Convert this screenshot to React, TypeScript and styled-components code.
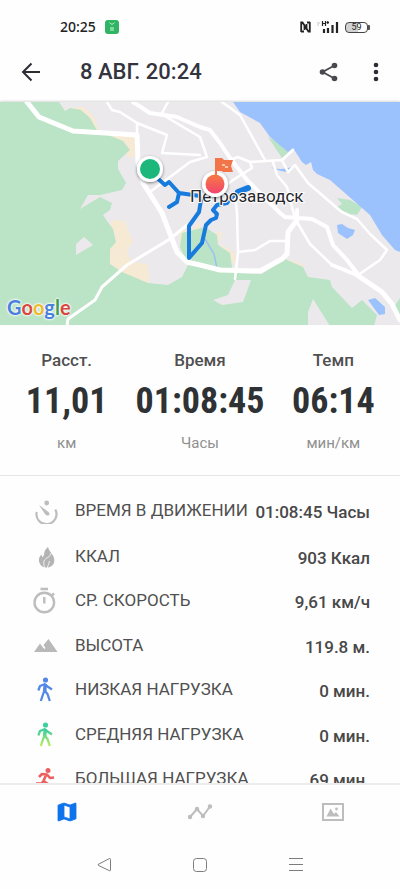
import React from "react";
import styled, { createGlobalStyle } from "styled-components";

const GlobalStyle = createGlobalStyle`
  * { box-sizing: border-box; }
  body { margin: 0; background: #fff; font-family: Roboto, "Noto Sans", sans-serif; color: #333; }
  button { border: 0; padding: 0; background: none; font: inherit; color: inherit; cursor: pointer; }
`;

const Screen = styled.div`
  display: flex;
  flex-direction: column;
  height: 100vh;
  background: #fefefe;
  overflow: hidden;
`;

const StatusBar = styled.div`
  display: flex;
  align-items: center;
  justify-content: space-between;
  flex: none;
  padding: 16px 30px 0 60px;
  height: 38px;
`;

const StatusGroup = styled.div<{ $gap: number }>`
  display: flex;
  align-items: center;
  gap: ${(p) => p.$gap}px;
`;

const Clock = styled.span`
  font: 500 14px/20px "Noto Sans", sans-serif;
  color: #222;
`;

const Battery = styled.span`
  display: flex;
  align-items: center;
  &::after { content: ""; width: 2px; height: 5px; background: #555; border-radius: 0 1px 1px 0; }
`;

const BatteryCell = styled.span`
  display: flex;
  align-items: center;
  justify-content: center;
  width: 23px;
  height: 11px;
  border: 1px solid #444;
  border-radius: 4px;
  background: linear-gradient(90deg, #d2d2d2 55%, #fff 55%);
  font-size: 9px;
  line-height: 9px;
  color: #222;
`;

const Header = styled.header`
  display: flex;
  align-items: center;
  flex: none;
  height: 64px;
  padding: 3px 12px 0 19px;
`;

const IconButton = styled.button`
  display: grid;
  place-items: center;
  width: 24px;
  height: 24px;
`;

const Title = styled.h1`
  flex: 1;
  margin: 0 0 0 37px;
  font-size: 22px;
  line-height: 28px;
  font-weight: 500;
  color: #34343f;
`;

const HeaderActions = styled.div`
  display: flex;
  gap: 23px;
`;

const MapPanel = styled.section`
  position: relative;
  flex: none;
  height: 223px;
  background: #ece9ed;
  box-shadow: 0 -1px 2px rgba(0, 0, 0, 0.15);
  overflow: hidden;
  svg { display: block; width: 100%; height: 100%; }
`;

const GoogleMark = styled.span`
  position: absolute;
  left: 7px;
  bottom: 6px;
  font: 700 20px/24px Lato, sans-serif;
  text-shadow: 0 0 2px #fff, 0 0 2px #fff, 0 0 3px #fff;
`;

const Letter = styled.span<{ $color: string }>`
  color: ${(p) => p.$color};
`;

const Stats = styled.section`
  display: grid;
  grid-template-columns: repeat(3, 1fr);
  flex: none;
  height: 151px;
  padding-top: 23px;
  border-bottom: 1px solid #e6e6e6;
  text-align: center;
`;

const Stat = styled.div`
  display: flex;
  flex-direction: column;
  align-items: center;
`;

const StatName = styled.span`
  font-size: 17px;
  line-height: 24px;
  font-weight: 500;
  color: #505050;
`;

const StatValue = styled.strong`
  font: 700 36px/58px "Roboto Condensed", "Liberation Sans Narrow", "Liberation Sans", sans-serif;
  color: #2f3234;
`;

const StatUnit = styled.span`
  font-size: 15px;
  line-height: 26px;
  color: #909090;
`;

const Details = styled.ul`
  flex: 1;
  min-height: 0;
  margin: 0;
  padding: 11px 30px 0 31px;
  list-style: none;
  overflow: hidden;
`;

const DetailRow = styled.li`
  display: grid;
  grid-template-columns: 28px 1fr auto;
  column-gap: 16px;
  align-items: center;
  height: 44px;
  &:nth-child(even) { height: 45px; }
  &:first-child { height: 46px; }
  svg { display: block; width: 28px; height: 28px; }
`;

const DetailName = styled.span`
  font-size: 17px;
  line-height: 20px;
  color: #505050;
  white-space: nowrap;
`;

const DetailValue = styled.span`
  padding-top: 4px;
  margin-left: -16px;
  font-size: 17px;
  line-height: 20px;
  font-weight: 500;
  color: #484848;
  white-space: nowrap;
`;

const Tabs = styled.nav`
  display: grid;
  grid-template-columns: repeat(3, 1fr);
  flex: none;
  height: 55px;
  border-top: 2px solid #ececec;
`;

const Tab = styled.button`
  display: grid;
  place-items: center;
  color: #bdbdbd;
  &[aria-current="page"] { color: #0f74ec; }
`;

const SystemNav = styled.nav`
  display: flex;
  justify-content: center;
  gap: 72px;
  flex: none;
  height: 51px;
  padding-top: 15px;
  color: #7c7c7c;
`;

function Walker({ paint }: { paint: string }) {
  return (
    <>
      <circle cx="14.500" cy="5" r="2.600" fill={paint} />
      <path d="M13 8.500L16 9L15.500 16L12 16Z" fill={paint} />
      <path d="M7.300 15.500L9 11L13.500 9.200L16.500 11.500L21 14.500M14 9.500L13 16.500L9.800 26M13.500 15.500L16.500 19L18.800 26" fill="none" stroke={paint} strokeWidth="2.300" strokeLinejoin="round" />
    </>
  );
}

const Icons = {
  motion: (
    <svg viewBox="0 0 28 28">
      <path d="M5.700 16A10 10 0 1 0 24.300 13.500" fill="none" stroke="#bdbdbd" strokeWidth="2.200" />
      <path d="M8 9L17.500 16Q19.500 18 17.500 19.500Q15.500 20 14 18Z" fill="#bdbdbd" />
      <circle cx="15.700" cy="7" r="2.400" fill="#bdbdbd" />
    </svg>
  ),
  fire: (
    <svg viewBox="0 0 28 28">
      <path d="M17 5C18 10 24 13 23.300 19C23 23 20 25 17 25.500H14.500C10 25 7.500 21 8 17C8.200 15 9.500 13.500 10.500 12.500C10.500 14 11 15 12 15C14 12 12 9 17 5Z" fill="#b4b4b4" />
      <path d="M20 11C20 15 14 16 13 19C12.300 21.500 13 24 14 26M18.300 19C18.500 22 16.500 23 16.500 26" fill="none" stroke="#fefefe" strokeWidth=".8" />
    </svg>
  ),
  timer: (
    <svg viewBox="0 0 28 28">
      <g fill="none" stroke="#bdbdbd" strokeWidth="2.400">
        <circle cx="13.300" cy="16.500" r="9.800" />
        <path d="M9.500 3H17M13.300 11V17.500M20 10L23 7.500" />
      </g>
    </svg>
  ),
  height: (
    <svg viewBox="0 0 28 28">
      <path d="M3 21L9 12.500L12 16.500L13.500 18L14.500 17L12.500 14L17.500 8L26.500 21Z" fill="#b9b9b9" />
    </svg>
  ),
  low: (
    <svg viewBox="0 0 28 28"><Walker paint="#5488e6" /></svg>
  ),
  medium: (
    <svg viewBox="0 0 28 28">
      <defs><linearGradient id="mid" gradientUnits="userSpaceOnUse" x1="0" y1="3" x2="0" y2="27"><stop offset=".3" stopColor="#3fcf9d" /><stop offset="1" stopColor="#c6ee58" /></linearGradient></defs>
      <Walker paint="url(#mid)" />
    </svg>
  ),
  high: (
    <svg viewBox="0 0 28 28">
      <g fill="none" stroke="#ec6060" strokeWidth="2.600" strokeLinejoin="round">
        <path d="M8 13L11 10L16 10.500L19 14L23 13.500M15 11L12.500 17L17 20V26M12.500 17L10.500 19.500H5" />
      </g>
      <circle cx="17" cy="6.500" r="2.500" fill="#ec6060" />
    </svg>
  ),
};

const stats = [
  { name: "Расст.", value: "11,01", unit: "км" },
  { name: "Время", value: "01:08:45", unit: "Часы" },
  { name: "Темп", value: "06:14", unit: "мин/км" },
];

const details: { icon: keyof typeof Icons; name: string; value: string }[] = [
  { icon: "motion", name: "ВРЕМЯ В ДВИЖЕНИИ", value: "01:08:45 Часы" },
  { icon: "fire", name: "ККАЛ", value: "903 Ккал" },
  { icon: "timer", name: "СР. СКОРОСТЬ", value: "9,61 км/ч" },
  { icon: "height", name: "ВЫСОТА", value: "119.8 м." },
  { icon: "low", name: "НИЗКАЯ НАГРУЗКА", value: "0 мин." },
  { icon: "medium", name: "СРЕДНЯЯ НАГРУЗКА", value: "0 мин." },
  { icon: "high", name: "БОЛЬШАЯ НАГРУЗКА", value: "69 мин." },
];

const google: [string, string][] = [
  ["G", "#4a7fdc"], ["o", "#d8473c"], ["o", "#edb92e"], ["g", "#4a7fdc"], ["l", "#3c9d55"], ["e", "#d8473c"],
];

function RouteMap() {
  return (
    <svg viewBox="0 0 400 223" preserveAspectRatio="xMidYMid slice" role="img" aria-label="Маршрут">
      <defs>
        <linearGradient id="finish" x1="0" y1="0" x2="0" y2="1"><stop offset="0" stopColor="#f67a45" /><stop offset="1" stopColor="#f2456c" /></linearGradient>
        <filter id="shade" x="-30%" y="-30%" width="160%" height="160%"><feDropShadow dx="0" dy="1" stdDeviation="1.500" floodOpacity=".5" /></filter>
      </defs>
      <rect width="400" height="224" fill="#ece9ed" />
      <g fill="#f6ead4">
        <path d="M66 6L84 5L94 15L99 29L80 20ZM106 33L135 34L135 55L128 55L120 40ZM111 118L125 119L133 140L127 148L131 160L148 162L149 182L120 172L108 162ZM282 156L302 162L309 178L290 165ZM216 130L222 130L220 142L234 150L236 163L225 155ZM180 130L190 125L186 160L180 145ZM191 128L200 120V132H194Z" />
      </g>
      <g fill="#bbe3c6">
        <path d="M0 0H59L65 9L70 6L81 8L90 16L98 30L108 33L123 39L130 48L118 59L118 67L126 81L122 88L100 93L88 93L80 107L100 95L112 101L110 108L103 113L107 119L113 127L116 140L110 147V162L122 170L148 181L168 183L182 175L188 163L200 165L233 171L262 172L285 157L303 165L308 175L330 178L332 185L352 206L362 198L377 213L374 224H0Z" />
        <path d="M182 131L205 125L217 133L218 143L230 151L233 172L188 163L180 145Z" />
        <path d="M268 35L277 40L289 50L282 56ZM337 96L350 98L362 105L357 113L343 110L337 105L342 102ZM345 110H355L350 114ZM400 196V218L394 205Z" />
      </g>
      <path d="M76 142L84 135L93 143L76 153ZM308 224V210L313 197L330 224ZM235 178H251L243 200L222 203L213 198L228 193Z" fill="#ece9ed" />
      <g fill="#9cc2fd">
        <path d="M233 0L240 10L260 21L270 35L288 50L293 46L302 60L306 63L311 60L313 68L317 72L330 78L370 113L382 133L395 148L400 150V0Z" />
        <path d="M337 123L342 122L348 126L355 128L353 133L347 137L338 131ZM368 198L375 196L385 205L385 212L379 213Z" />
        <path d="M270 65Q280 69 292 65L290 70Q280 70 270 65Z" />
      </g>
      <path d="M205 137L214 152L217 166" fill="none" stroke="#9cc2ee" strokeWidth="1.500" />
      <g fill="none" stroke="#fff" strokeLinejoin="round" strokeLinecap="round">
        <path strokeWidth="5" d="M27 0L39 15L73 29L137 33L138 60L143 81L162 111L177 150L187 160L200 163L220 168L260 169L282 157L287 152L288 130L297 118M357 173L382 190L392 202L400 218" />
        <path strokeWidth="4" d="M133 0L150 11L177 15L200 25L210 28L220 41L230 56L247 78L267 98L280 111L285 115L312 117L327 125L333 143L347 158L357 171M297 118V108M332 163L357 173" />
        <path strokeWidth="2.500" d="M107 0L112 8L120 10L137 21L167 33L162 51L200 53M137 21V33M168 0L162 11M163 13L200 35L207 55L190 60L150 90M222 0L240 13L265 58M230 58L238 55L250 60L282 58L293 48M250 60L252 66L233 78L220 88M273 60L277 73L287 85L294 113M282 58L288 70L295 63L308 81L337 106L342 110L357 117L370 132L387 148L380 158L358 173M297 120L310 142L332 163M235 95L237 110L238 150L235 177M238 150L255 148L270 139H287" />
        <path strokeWidth="3" d="M67 224L68 217L95 198L102 185L127 163L170 137L187 123" />
      </g>
      <g fill="none" stroke="#167bdc" strokeWidth="4" strokeLinejoin="round" strokeLinecap="round">
        <path d="M156 75L165 83L169 80L179 91L200 94L201 98L199 110L189 124V156L202 141L206 123L211 118L216 116L217 112L213 108L217 103L227 101L233 93L247 86L240 89L230 97M179 91L177 100L169 105" />
        <path strokeWidth="6" d="M238 90L248 86" />
      </g>
      <text x="190" y="100" fontFamily="Roboto, sans-serif" fontSize="17" fill="#26262a" stroke="#fff" strokeWidth="2" paintOrder="stroke">Петрозаводск</text>
      <g filter="url(#shade)">
        <circle cx="150" cy="67" r="13" fill="#fff" />
        <circle cx="215" cy="82" r="13" fill="#fff" />
      </g>
      <circle cx="150" cy="67" r="10" fill="#1db67b" />
      <circle cx="215" cy="82" r="9.500" fill="url(#finish)" />
      <path d="M215 56H222L224 58H233L231 64L233 70H223L222 69H217V78H215Z" fill="#f27549" />
      <path d="M222 62h3v2h-3zM225 64h3v2h-3z" fill="#f9c4a8" />
    </svg>
  );
}

export default function App() {
  return (
    <Screen>
      <GlobalStyle />
      <StatusBar>
        <StatusGroup $gap={9}>
          <Clock>20:25</Clock>
          <svg width="14" height="14" viewBox="0 0 14 14">
            <rect width="14" height="14" rx="3" fill="#2fb564" />
            <path d="M4.500 2.500Q7 6 9.500 2.500" fill="none" stroke="#c4efd2" />
            <path d="M5 7h4v4H5zM7 7v4M5 9h4" fill="#c4efd2" stroke="#2fb564" strokeWidth=".5" />
          </svg>
        </StatusGroup>
        <StatusGroup $gap={6}>
          <svg width="11" height="12" viewBox="0 0 11 12">
            <path d="M1.200 11V1.500H2.500L6.500 7.500V3M9.800 1V10.500H8.500L4.500 4.500V9M4 10.500H1M7 1.500H10" fill="none" stroke="#222" strokeWidth="1.800" />
          </svg>
          <svg width="22" height="14" viewBox="0 0 22 14">
            <path d="M0 3H3M0 5H2" stroke="#c6c6c6" />
            <path d="M5.500 1V6M8.500 1V6M5.500 3.500H8.500M9.500 2.500H12M10.800 1V4" stroke="#222" fill="none" strokeWidth="1.200" />
            <path d="M7 9V13M11 8V13M15.500 5V13M20 2V13" stroke="#222" strokeWidth="2.200" />
          </svg>
          <Battery><BatteryCell>59</BatteryCell></Battery>
        </StatusGroup>
      </StatusBar>

      <Header>
        <IconButton aria-label="Назад">
          <svg width="24" height="24" viewBox="0 0 24 24" fill="none" stroke="#2c2c34" strokeWidth="2"><path d="M21 12H4.500M12.500 3.500L4 12L12.500 20.500" /></svg>
        </IconButton>
        <Title>8 АВГ. 20:24</Title>
        <HeaderActions>
          <IconButton aria-label="Поделиться">
            <svg width="24" height="24" viewBox="0 0 24 24" fill="#4a4a4e">
              <path d="M17.500 5.500L5.500 12L17.500 18.500" fill="none" stroke="#4a4a4e" strokeWidth="1.800" />
              <circle cx="17.500" cy="5.500" r="2.800" /><circle cx="5.500" cy="12" r="2.800" /><circle cx="17.500" cy="18.500" r="2.800" />
            </svg>
          </IconButton>
          <IconButton aria-label="Ещё">
            <svg width="24" height="24" viewBox="0 0 24 24" fill="#2c2c34"><circle cx="12" cy="5" r="2.300" /><circle cx="12" cy="12" r="2.300" /><circle cx="12" cy="19" r="2.300" /></svg>
          </IconButton>
        </HeaderActions>
      </Header>

      <MapPanel>
        <RouteMap />
        <GoogleMark>{google.map(([c, color], i) => <Letter key={i} $color={color}>{c}</Letter>)}</GoogleMark>
      </MapPanel>

      <Stats>
        {stats.map((s) => (
          <Stat key={s.name}>
            <StatName>{s.name}</StatName>
            <StatValue>{s.value}</StatValue>
            <StatUnit>{s.unit}</StatUnit>
          </Stat>
        ))}
      </Stats>

      <Details>
        {details.map((d) => (
          <DetailRow key={d.name}>
            {Icons[d.icon]}
            <DetailName>{d.name}</DetailName>
            <DetailValue>{d.value}</DetailValue>
          </DetailRow>
        ))}
      </Details>

      <Tabs>
        <Tab aria-label="Карта" aria-current="page">
          <svg width="24" height="24" viewBox="0 0 24 24" fill="currentColor"><path d="M20.500 3l-.16.030L15 5.100 9 3 3.360 4.900c-.21.070-.36.250-.36.480V20.500c0 .28.220.5.500.5l.160-.030L9 18.900l6 2.100 5.640-1.900c.21-.070.36-.250.36-.480V3.500c0-.28-.220-.5-.5-.5zM15 19l-6-2.110V5l6 2.110V19z" stroke="currentColor" strokeWidth=".8" /></svg>
        </Tab>
        <Tab aria-label="График">
          <svg width="26" height="24" viewBox="0 0 26 24" fill="currentColor">
            <path d="M3 17L10 9L16 16L23 6.500" fill="none" stroke="currentColor" strokeWidth="2" />
            <circle cx="3" cy="17" r="2.200" /><circle cx="10" cy="9" r="2.200" /><circle cx="16" cy="16" r="2.200" /><circle cx="23" cy="6.500" r="2.200" />
          </svg>
        </Tab>
        <Tab aria-label="Фото">
          <svg width="24" height="24" viewBox="0 0 24 24" fill="currentColor">
            <rect x="2" y="4" width="20" height="16" fill="none" stroke="currentColor" strokeWidth="2" />
            <path d="M5.500 16.500L9.500 8.500L13 14L15 12L18.500 16.500Z" /><circle cx="15.500" cy="9" r="1.400" />
          </svg>
        </Tab>
      </Tabs>

      <SystemNav>
        <IconButton aria-label="Система: назад">
          <svg width="24" height="24" viewBox="0 0 24 24" fill="none" stroke="currentColor" strokeLinejoin="round"><path d="M6 11.500L17.500 5.500Q18.500 5.300 18.500 6.500V17Q18.500 18 17.500 17.700L6.500 12.500Q5.700 12 6 11.500Z" /></svg>
        </IconButton>
        <IconButton aria-label="Домой">
          <svg width="24" height="24" viewBox="0 0 24 24" fill="none" stroke="currentColor"><rect x="5.500" y="5.500" width="13" height="13" rx="3" /></svg>
        </IconButton>
        <IconButton aria-label="Недавние">
          <svg width="24" height="24" viewBox="0 0 24 24" fill="none" stroke="currentColor"><path d="M5 5.500H19M5 11.500H19M5 17.500H19" /></svg>
        </IconButton>
      </SystemNav>
    </Screen>
  );
}
